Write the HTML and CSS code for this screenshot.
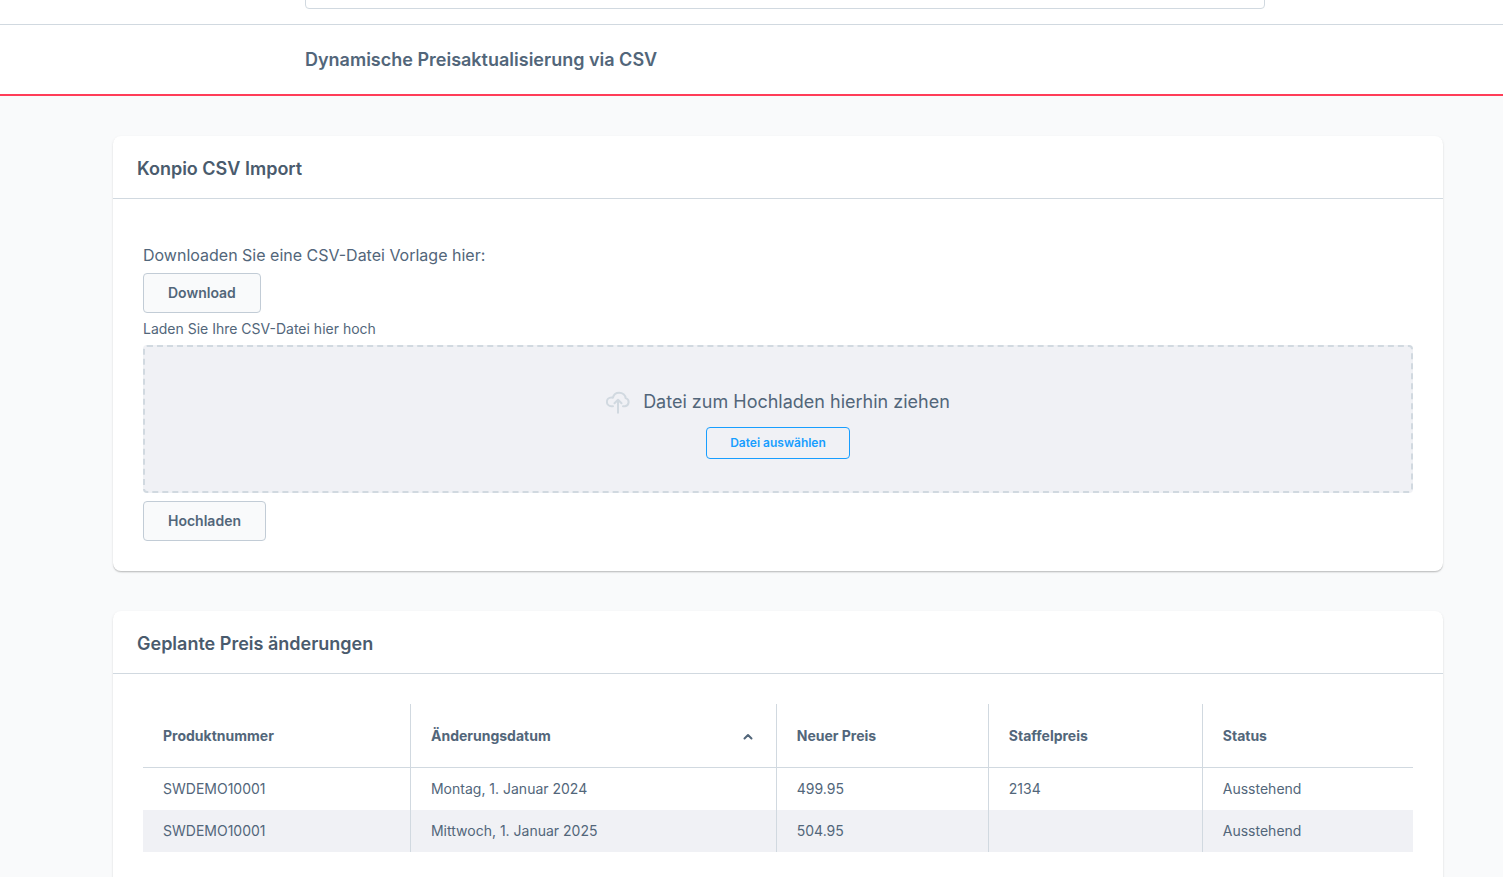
FILE: index.html
```html
<!DOCTYPE html>
<html lang="de">
<head>
<meta charset="utf-8">
<meta name="viewport" content="width=device-width, initial-scale=1">
<title>Dynamische Preisaktualisierung via CSV</title>
<link rel="stylesheet" href="styles.css">
</head>
<body>
<header class="page-head">
  <div class="search-bar">
    <input class="search-input" type="search" aria-label="Suche">
  </div>
  <div class="smart-bar">
    <h1 class="smart-bar-title">Dynamische Preisaktualisierung via CSV</h1>
  </div>
</header>
<main class="content">
  <section class="card">
    <h2 class="card-title">Konpio CSV Import</h2>
    <div class="card-body import">
      <p class="import-intro">Downloaden Sie eine CSV-Datei Vorlage hier:</p>
      <button class="button" type="button">Download</button>
      <p class="upload-label" id="upload-label">Laden Sie Ihre CSV-Datei hier hoch</p>
      <div class="dropzone" role="group" aria-labelledby="upload-label">
        <div class="dropzone-hint">
          <svg class="cloud-icon" viewBox="0 0 24 24" aria-hidden="true">
            <path d="M7 16.200H5.300A4.400 4.400 0 0 1 5.300 7.400Q6.100 7.400 6.900 7.700C7.600 4.700 10.100 2.700 13.100 2.700C16.700 2.700 19.300 5.200 19.600 8.100A4.150 4.150 0 0 1 19 16.200H17M12 22.700V9.800M8.500 13.200L12 9.700L15.500 13.200"/>
          </svg>
          <span>Datei zum Hochladen hierhin ziehen</span>
        </div>
        <button class="button-outline" type="button">Datei auswählen</button>
      </div>
      <button class="button" type="button">Hochladen</button>
    </div>
  </section>
  <section class="card">
    <h2 class="card-title">Geplante Preis änderungen</h2>
    <div class="card-body">
      <table class="grid">
        <colgroup>
          <col class="col-number"><col class="col-date"><col class="col-price"><col class="col-tier"><col>
        </colgroup>
        <thead>
          <tr>
            <th scope="col">Produktnummer</th>
            <th scope="col" aria-sort="ascending">
              <div class="sorted">
                <span>Änderungsdatum</span>
                <svg class="sort-icon" viewBox="0 0 10 8" aria-hidden="true"><path d="M1.500 6.500L5 3L8.500 6.500"/></svg>
              </div>
            </th>
            <th scope="col">Neuer Preis</th>
            <th scope="col">Staffelpreis</th>
            <th scope="col">Status</th>
          </tr>
        </thead>
        <tbody>
          <tr><td>SWDEMO10001</td><td>Montag, 1. Januar 2024</td><td>499.95</td><td>2134</td><td>Ausstehend</td></tr>
          <tr><td>SWDEMO10001</td><td>Mittwoch, 1. Januar 2025</td><td>504.95</td><td></td><td>Ausstehend</td></tr>
        </tbody>
      </table>
    </div>
  </section>
</main>
</body>
</html>
```
FILE: styles.css
```css
* {
  box-sizing: border-box;
}

body {
  margin: 0;
  background: #f9fafb;
  color: #52667a;
  font-family: Inter, "Liberation Sans", sans-serif;
  font-size: 14px;
  line-height: 20px;
  -webkit-font-smoothing: antialiased;
}

h1, h2, p {
  margin: 0;
}

button {
  font-family: inherit;
  cursor: pointer;
}

.page-head {
  background: #fff;
  border-bottom: 2px solid #ff3d58;
}

/* The search field is scrolled so that only its lower edge shows. */
.search-bar {
  display: flex;
  align-items: flex-end;
  height: 25px;
  padding: 0 238px 15px 305px;
  overflow: hidden;
  border-bottom: 1px solid #d1d9e0;
}

.search-input {
  flex: 1;
  flex-shrink: 0;
  height: 48px;
  padding: 0 16px;
  border: 1px solid #d1d9e0;
  border-radius: 4px;
  background: #fff;
  font: inherit;
  color: inherit;
}

.smart-bar {
  padding: 23px 238px 22px 305px;
}

.smart-bar-title {
  font-size: 18px;
  font-weight: 600;
  line-height: 24px;
}

.content {
  display: flex;
  flex-direction: column;
  gap: 40px;
  padding: 40px 60px 40px 113px;
}

.card {
  background: #fff;
  border-radius: 8px;
  box-shadow: 0 1px 1px rgba(0, 0, 0, 0.14), 0 2px 1px rgba(0, 0, 0, 0.04), 0 1px 3px rgba(0, 0, 0, 0.08);
}

.card-title {
  padding: 21px 24px 17px;
  border-bottom: 1px solid #d1d9e0;
  color: #4a5b6d;
  font-size: 18px;
  font-weight: 600;
  line-height: 24px;
}

.card-body {
  padding: 30px;
}

.import {
  display: flex;
  flex-direction: column;
  align-items: flex-start;
}

.import-intro {
  padding: 14px 0 6px;
  font-size: 16px;
  line-height: 24px;
}

.button {
  height: 40px;
  padding: 0 24px 2px;
  border: 1px solid #c2ccd6;
  border-radius: 4px;
  background: #f9fafb;
  color: #52667a;
  font-size: 14px;
  font-weight: 600;
}

.upload-label {
  padding: 6px 0;
}

.dropzone {
  display: flex;
  flex-direction: column;
  align-items: center;
  gap: 11px;
  align-self: stretch;
  height: 148px;
  margin-bottom: 8px;
  padding-top: 41px;
  border: 2px dashed #d1d9e0;
  border-radius: 4px;
  background: #f0f1f5;
}

.dropzone-hint {
  display: flex;
  align-items: center;
  gap: 13px;
  font-size: 18px;
  line-height: 28px;
}

.cloud-icon {
  width: 24px;
  height: 24px;
  fill: none;
  stroke: #d1d9e0;
  stroke-width: 2;
  stroke-linecap: round;
  stroke-linejoin: round;
}

.button-outline {
  height: 32px;
  padding: 0 23px 2px;
  border: 1px solid #189eff;
  border-radius: 4px;
  background: transparent;
  color: #189eff;
  font-size: 12px;
  font-weight: 600;
}

.grid {
  width: 100%;
  margin-bottom: 30px;
  border-spacing: 0;
  table-layout: fixed;
}

.col-number {
  width: 21.1%;
}

.col-date {
  width: 28.8%;
}

.col-price {
  width: 16.7%;
}

.col-tier {
  width: 16.85%;
}

.grid th,
.grid td {
  padding: 11px 20px;
  border-right: 1px solid #d1d9e0;
  text-align: left;
}

.grid th {
  padding: 22px 20px 21px;
  border-bottom: 1px solid #d1d9e0;
  font-weight: 700;
}

.grid th:last-child,
.grid td:last-child {
  border-right: 0;
}

.grid tbody tr:nth-child(even) {
  background: #f0f1f5;
}

.sorted {
  display: flex;
  align-items: center;
  justify-content: space-between;
  padding-right: 3px;
}

.sort-icon {
  width: 10px;
  height: 8px;
  fill: none;
  stroke: #52667a;
  stroke-width: 2;
  stroke-linecap: round;
  stroke-linejoin: round;
}
```
